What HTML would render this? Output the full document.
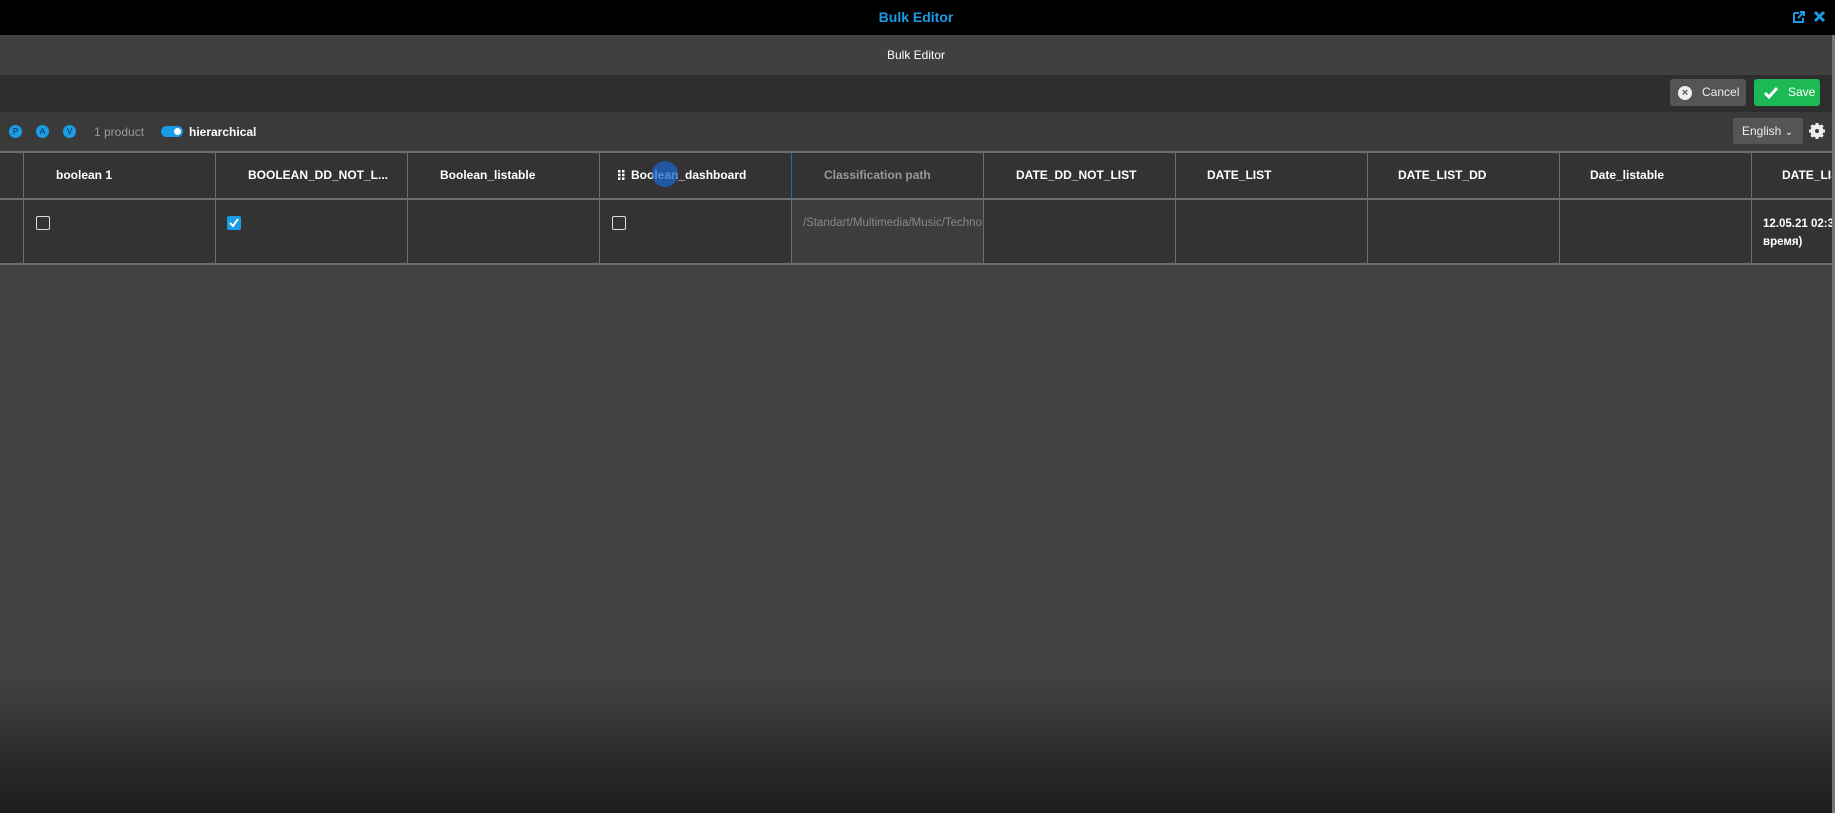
<!DOCTYPE html><html><head><meta charset="utf-8"><style>
*{margin:0;padding:0;box-sizing:border-box}
body{width:1835px;height:813px;overflow:hidden;background:#414141;font-family:"Liberation Sans",sans-serif;position:relative}
.a{position:absolute}
.top{left:0;top:0;width:1835px;height:35px;background:#000}
.bar2{left:0;top:35px;width:1832px;height:40px;background:#404040}
.tb{left:0;top:75px;width:1832px;height:37px;background:#2e2e2e}
.fb{left:0;top:112px;width:1832px;height:39px;background:#3a3a3a}
.grad{left:0;top:680px;width:1835px;height:133px;background:linear-gradient(#414141,#1c1c1c)}
.edge{left:1832px;top:35px;width:3px;height:778px;background:#777}
.hd,.rw{left:0;width:1832px;background:#333;border-top:2px solid #6e6e6e}
.hd{top:151px;height:47px}
.rw{top:198px;height:67px;border-bottom:2px solid #6e6e6e}
.vl{position:absolute;top:0;bottom:0;width:1px;background:#6e6e6e}
.h{position:absolute;top:15px;color:#fff;font-size:12px;font-weight:bold;white-space:nowrap}
.cb{position:absolute;top:16px;width:14px;height:14px;border:1.5px solid #ddd;border-radius:2px}
.circ{position:absolute;top:125px;width:13px;height:13px;border-radius:50%;background:#1a9be6;color:#123;font-size:8px;text-align:center;line-height:13px}
</style></head><body>
<div class="a top"></div>
<div class="a" style="left:0;top:9px;width:1832px;text-align:center;color:#1a9be6;font-weight:bold;font-size:14px">Bulk Editor</div>
<svg class="a" style="left:1792px;top:10px" width="14" height="14" viewBox="0 0 14 14"><path d="M2 3h5M2 3v9h9V8" stroke="#1a9be6" stroke-width="2" fill="none"/><path d="M6 8l6-6M8 2h4v4" stroke="#1a9be6" stroke-width="2" fill="none"/></svg>
<svg class="a" style="left:1813px;top:10px" width="13" height="13" viewBox="0 0 13 13"><path d="M2 2l9 9M11 2l-9 9" stroke="#1a9be6" stroke-width="3"/></svg>
<div class="a bar2"></div>
<div class="a" style="left:0;top:48px;width:1832px;text-align:center;color:#fff;font-size:12px">Bulk Editor</div>
<div class="a tb"></div>
<div class="a" style="left:1670px;top:79px;width:76px;height:27px;background:#555;border-radius:3px;color:#eee;font-size:12px;line-height:27px"><span style="position:absolute;left:8px;top:7px;width:14px;height:14px;border-radius:50%;background:#eee;color:#555;font-size:11px;line-height:14px;text-align:center;font-weight:bold">×</span><span style="position:absolute;left:32px">Cancel</span></div>
<div class="a" style="left:1754px;top:79px;width:66px;height:27px;background:#1db954;border-radius:3px;color:#fff;font-size:12px;line-height:27px"><svg style="position:absolute;left:9px;top:7px" width="16" height="13" viewBox="0 0 16 13"><path d="M2 7l4 4 8-9" stroke="#fff" stroke-width="3" fill="none"/></svg><span style="position:absolute;left:34px">Save</span></div>
<div class="a fb"></div>
<div class="circ" style="left:9px">P</div><div class="circ" style="left:36px">A</div><div class="circ" style="left:63px">V</div>
<div class="a" style="left:94px;top:125px;color:#999;font-size:12px">1 product</div>
<div class="a" style="left:161px;top:126px;width:22px;height:11px;border-radius:6px;background:#1a9be6"><div style="position:absolute;right:2px;top:2px;width:7px;height:7px;border-radius:50%;background:#fff"></div></div>
<div class="a" style="left:189px;top:125px;color:#fff;font-size:12px;font-weight:bold">hierarchical</div>
<div class="a" style="left:1733px;top:118px;width:70px;height:26px;background:#555;border-radius:2px;color:#eee;font-size:12px;line-height:26px;padding-left:9px">English <span style="font-size:10px">&#8964;</span></div>
<svg class="a" style="left:1809px;top:123px" width="16" height="16" viewBox="0 0 16 16"><circle cx="8" cy="8" r="5" fill="none" stroke="#eee" stroke-width="3"/><path d="M8 0v16M0 8h16M2.3 2.3l11.4 11.4M13.7 2.3L2.3 13.7" stroke="#eee" stroke-width="3"/><circle cx="8" cy="8" r="2" fill="#3a3a3a"/></svg>
<div class="a hd">
<div class="vl" style="left:23px"></div><div class="vl" style="left:215px"></div><div class="vl" style="left:407px"></div><div class="vl" style="left:599px"></div><div class="vl" style="left:791px;background:#2a6f95"></div><div class="vl" style="left:983px"></div><div class="vl" style="left:1175px"></div><div class="vl" style="left:1367px"></div><div class="vl" style="left:1559px"></div><div class="vl" style="left:1751px"></div>
<div class="h" style="left:56px">boolean 1</div>
<div class="h" style="left:248px">BOOLEAN_DD_NOT_L...</div>
<div class="h" style="left:440px">Boolean_listable</div>
<svg style="position:absolute;left:618px;top:17px" width="7" height="10" viewBox="0 0 7 10"><rect x="0" y="0" width="2.5" height="2.5" fill="#fff"/><rect x="4" y="0" width="2.5" height="2.5" fill="#fff"/><rect x="0" y="3.7" width="2.5" height="2.5" fill="#fff"/><rect x="4" y="3.7" width="2.5" height="2.5" fill="#fff"/><rect x="0" y="7.4" width="2.5" height="2.5" fill="#fff"/><rect x="4" y="7.4" width="2.5" height="2.5" fill="#fff"/></svg>
<div class="h" style="left:631px">Boolean_dashboard</div>
<div class="h" style="left:824px;color:#999">Classification path</div>
<div class="h" style="left:1016px">DATE_DD_NOT_LIST</div>
<div class="h" style="left:1207px">DATE_LIST</div>
<div class="h" style="left:1398px">DATE_LIST_DD</div>
<div class="h" style="left:1590px">Date_listable</div>
<div class="h" style="left:1782px">DATE_LIST</div>
<div style="position:absolute;left:652px;top:8px;width:26px;height:26px;border-radius:50%;background:rgba(30,100,200,.75)"></div>
</div>
<div class="a rw">
<div style="position:absolute;left:791px;top:0;width:192px;bottom:0;background:#3d3d3d"></div>
<div class="vl" style="left:23px"></div><div class="vl" style="left:215px"></div><div class="vl" style="left:407px"></div><div class="vl" style="left:599px"></div><div class="vl" style="left:791px"></div><div class="vl" style="left:983px"></div><div class="vl" style="left:1175px"></div><div class="vl" style="left:1367px"></div><div class="vl" style="left:1559px"></div><div class="vl" style="left:1751px"></div>
<div class="cb" style="left:36px"></div>
<div class="cb" style="left:227px;background:#1a9be6;border-color:#1a9be6"><svg style="position:absolute;left:1px;top:1px" width="10" height="10" viewBox="0 0 10 10"><path d="M1 5l3 3 5-7" stroke="#fff" stroke-width="2" fill="none"/></svg></div>
<div class="cb" style="left:612px"></div>
<div style="position:absolute;left:803px;top:17px;color:#888;font-size:11.5px;white-space:nowrap;width:180px;overflow:hidden">/Standart/Multimedia/Music/Techno</div>
<div style="position:absolute;left:1763px;top:15px;color:#fff;font-size:11.5px;font-weight:bold;line-height:18px;white-space:nowrap">12.05.21 02:3<br>время)</div>
</div>
<div class="a grad"></div>
<div class="a edge"></div>
</body></html>
